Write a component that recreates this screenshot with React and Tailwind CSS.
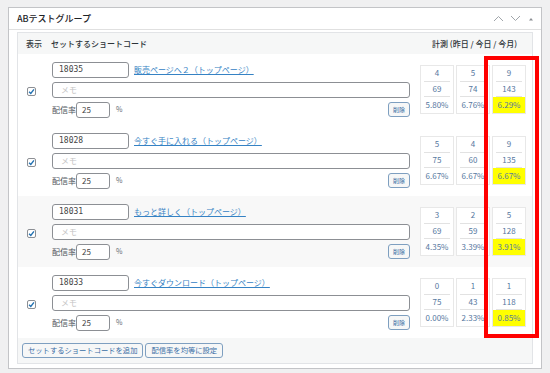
const rows = [
  { code: "18035", title: "販売ページへ２（トップページ）", stats: [["4", "69", "5.80%"], ["5", "74", "6.76%"], ["9", "143", "6.29%"]], bg: "bg-white" },
  { code: "18028", title: "今すぐ手に入れる（トップページ）", stats: [["5", "75", "6.67%"], ["4", "60", "6.67%"], ["9", "135", "6.67%"]], bg: "bg-white" },
  { code: "18031", title: "もっと詳しく（トップページ）", stats: [["3", "69", "4.35%"], ["2", "59", "3.39%"], ["5", "128", "3.91%"]], bg: "bg-[#f8f8f8]" },
  { code: "18033", title: "今すぐダウンロード（トップページ）", stats: [["0", "75", "0.00%"], ["1", "43", "2.33%"], ["1", "118", "0.85%"]], bg: "bg-white" },
];

function Check() {
  return (
    <div className="w-[9px] h-[9px] border border-[#8c8f94] rounded-[2px] bg-white flex items-center justify-center">
      <svg width="7" height="7" viewBox="0 0 8 8">
        <path d="M1.2 4.2 L3.2 6.2 L6.8 1.6" fill="none" stroke="#2271b1" strokeWidth="1.6" />
      </svg>
    </div>
  );
}

function StatBox({ s, hi }) {
  return (
    <div className="w-[34px] h-[49px] border border-[#e8e8e8] bg-white flex flex-col items-center text-[8px] text-[#5577a0]">
      <div className="h-[16px] w-[26px] border-b border-[#e2e2e2] flex items-center justify-center">{s[0]}</div>
      <div className="h-[16px] w-[26px] border-b border-[#e2e2e2] flex items-center justify-center">{s[1]}</div>
      <div className={"h-[16px] w-full flex items-center justify-center " + (hi ? "bg-[#ffff00]" : "")}>{s[2]}</div>
    </div>
  );
}

function Row({ r }) {
  return (
    <div className={"h-[71px] flex items-center " + r.bg}>
      <div className="w-[34px] flex pl-[9px] pt-[4px]">
        <Check />
      </div>
      <div className="w-[358px] flex flex-col gap-[4px]">
        <div className="flex items-center gap-[5px]">
          <div className="w-[77px] h-[16px] border border-[#8c8f94] rounded-[3px] bg-white px-[6px] flex items-center text-[8px] font-['DejaVu_Sans_Mono',monospace] text-[#444]">
            {r.code}
          </div>
          <span className="text-[8px] text-[#3582c4] underline">{r.title}</span>
        </div>
        <div className="h-[16px] border border-[#8c8f94] rounded-[3px] bg-white px-[8px] flex items-center text-[8px] text-[#c4c4c4]">
          メモ
        </div>
        <div className="flex items-center">
          <span className="text-[8px] text-[#50575e] w-[24px]">配信率</span>
          <div className="w-[34px] h-[16px] border border-[#8c8f94] rounded-[3px] bg-white px-[5px] flex items-center text-[8px] text-[#444]">25</div>
          <span className="text-[7px] text-[#646970] ml-[6px]">%</span>
          <button className="ml-auto h-[15px] w-[22px] border border-[#7e9fc0] rounded-[3px] bg-[#f6f7f7] text-[6px] text-[#3a6ea5] flex items-center justify-center">削除</button>
        </div>
      </div>
      <div className="ml-[10px] flex gap-[2px]">
        {r.stats.map((s, i) => (
          <StatBox key={i} s={s} hi={i === 2} />
        ))}
      </div>
    </div>
  );
}

export default function App() {
  return (
    <div className="relative w-[550px] h-[373px] bg-[#f0f0f1] pt-[7px] pl-[8px] font-['Noto_Sans_CJK_JP',sans-serif] overflow-hidden">
      <div className="w-[534px] border border-[#c3c4c7] bg-white">
        {/* header */}
        <div className="h-[22px] border-b border-[#e0e0e0] flex items-center justify-between pl-[8px] pr-[6px]">
          <span className="text-[9px] font-medium text-[#1d2327]">ABテストグループ</span>
          <div className="flex items-center gap-[6px]">
            <svg width="11" height="7" viewBox="0 0 11 7"><path d="M1 6 L5.5 1.5 L10 6" fill="none" stroke="#a0a5aa" strokeWidth="1" /></svg>
            <svg width="11" height="7" viewBox="0 0 11 7"><path d="M1 1 L5.5 5.5 L10 1" fill="none" stroke="#a0a5aa" strokeWidth="1" /></svg>
            <svg width="8" height="6" viewBox="0 0 8 6"><path d="M2 4.5 L4 2 L6 4.5 Z" fill="#8c8f94" /></svg>
          </div>
        </div>

        {/* body */}
        <div className="px-[8px] pt-[2px] pb-[4px]">
          <div className="border border-[#e2e4e7]">
            <div className="h-[21px] bg-[#f6f7f7] flex items-center text-[8px] font-medium text-[#2c3338]">
              <span className="ml-[8px] w-[25px]">表示</span>
              <span>セットするショートコード</span>
              <span className="ml-auto mr-[15px]">計測 (昨日 / 今日 / 今月)</span>
            </div>
            {rows.map((r) => (
              <Row key={r.code} r={r} />
            ))}
            <div className="h-[25px] bg-[#f6f7f7] flex items-center gap-[2px] pl-[4px]">
              <button className="h-[15px] px-[5px] border border-[#7e9fc0] rounded-[3px] bg-[#f6f7f7] text-[7.3px] text-[#3a6ea5] flex items-center">セットするショートコードを追加</button>
              <button className="h-[15px] px-[5px] border border-[#7e9fc0] rounded-[3px] bg-[#f6f7f7] text-[7.3px] text-[#3a6ea5] flex items-center">配信率を均等に設定</button>
            </div>
          </div>
        </div>
      </div>

      {/* red highlight */}
      <div className="absolute left-[484px] top-[56px] w-[55px] h-[282px] border-[4px] border-[#ff0000]" />
    </div>
  );
}
